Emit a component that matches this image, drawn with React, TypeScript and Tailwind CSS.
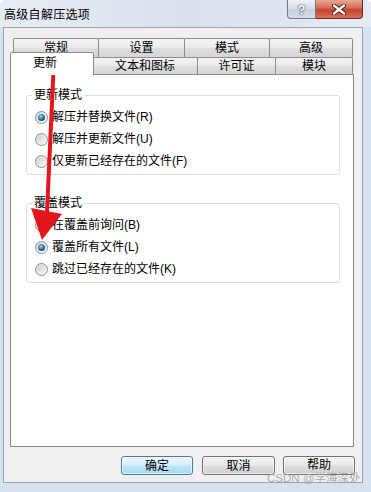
import React from 'react';

const FONT = "font-['Liberation_Sans','Noto_Sans_CJK_SC',sans-serif]";

function Radio({ checked }: { checked?: boolean }) {
    return (
        <span className="flex h-[13px] w-[13px] shrink-0 items-center justify-center rounded-full border border-[#8e8f8f] bg-[linear-gradient(135deg,#d4d4d4,#ffffff)]">
            {checked ? (
                <span className="h-[7px] w-[7px] rounded-full bg-[radial-gradient(circle_at_40%_35%,#9fd6f5,#23679a_55%,#0a2e4a)]" />
            ) : (
                <span className="h-[7px] w-[7px] rounded-full bg-[linear-gradient(135deg,#cdcdcd,#f6f6f6)]" />
            )}
        </span>
    );
}

function Group({ title, options, checked, className }: { title: string; options: string[]; checked: number; className?: string }) {
    return (
        <fieldset className={`m-0 min-w-0 rounded-[3px] border border-[#d5dfe5] p-0 ${className ?? ''}`}>
            <legend className="ml-[5px] px-[2px] text-[12px] leading-[14px]">{title}</legend>
            <div className="flex flex-col pb-[2px] pl-[8px] pt-[4px]">
                {options.map((o, i) => (
                    <div key={o} className="flex h-[22px] items-center gap-[4px] text-[12px]">
                        <Radio checked={i === checked} />
                        <span>{o}</span>
                    </div>
                ))}
            </div>
        </fieldset>
    );
}

const TAB = 'flex items-center justify-center border border-b-0 border-[#898c95] rounded-t-[2px] bg-[linear-gradient(#f4f4f4,#ececec_45%,#dedede_55%,#d6d6d6)] text-[12px] leading-[14px]';
const BTN = 'flex h-[19px] items-center justify-center rounded-[3px] border text-[12px] leading-[12px]';

export default function App() {
    return (
        <div className={`relative flex h-[492px] w-[371px] flex-col overflow-hidden rounded-t-[6px] bg-[#d6e2ef] text-black ${FONT}`}>
            {/* Title bar */}
            <div className="flex h-[27px] shrink-0 items-start justify-between bg-[linear-gradient(90deg,#e6edf5,#d9e2ec_50%,#e3ebf4)] pl-[4px] pr-[8px]">
                <span className="pt-[8px] text-[12px] leading-[14px] tracking-[0.3px]">高级自解压选项</span>
                <div className="flex h-[19px]">
                    <div className="flex w-[29px] items-center justify-center rounded-bl-[4px] border border-t-0 border-[#6d7b8c] bg-[linear-gradient(#eef2f7,#d5dde7_50%,#c3cfdc_55%,#d7e0ea)]">
                        <span className="text-[13px] font-bold leading-none text-white [text-shadow:0_0_2px_#2f3a47,0_0_1px_#2f3a47]">?</span>
                    </div>
                    <div className="flex w-[47px] items-center justify-center rounded-br-[4px] border border-l-0 border-t-0 border-[#6b2a1f] bg-[linear-gradient(#e9a896,#d66a52_45%,#c4412a_55%,#d9735c)]">
                        <svg width="14" height="11" viewBox="0 0 14 11">
                            <path d="M2 1.5 L12 9.5 M12 1.5 L2 9.5" stroke="#3b1a14" strokeWidth="4.2" strokeLinecap="round" />
                            <path d="M2 1.5 L12 9.5 M12 1.5 L2 9.5" stroke="#ffffff" strokeWidth="2.4" strokeLinecap="round" />
                        </svg>
                    </div>
                </div>
            </div>

            {/* Client area */}
            <div className="mb-[9px] ml-[3px] mr-[8px] flex flex-1 flex-col border border-[#97a5b4] bg-[#f0f0f0]">
                {/* Tab row 1 */}
                <div className="ml-[9px] mt-[10px] flex h-[19px]">
                    <div className={`${TAB} w-[86px]`}>常规</div>
                    <div className={`${TAB} -ml-px w-[87px]`}>设置</div>
                    <div className={`${TAB} -ml-px w-[86px]`}>模式</div>
                    <div className={`${TAB} -ml-px w-[84px]`}>高级</div>
                </div>
                {/* Tab row 2 */}
                <div className="ml-[6px] flex h-[17px] items-start">
                    <div className="relative z-10 -mt-[5px] flex h-[23px] w-[84px] items-start rounded-t-[2px] border border-b-0 border-[#898c95] bg-white pl-[22px] pt-[3px] text-[12px] leading-[14px]">
                        更新
                    </div>
                    <div className={`${TAB} -ml-[2px] h-[17px] w-[106px]`}>文本和图标</div>
                    <div className={`${TAB} -ml-px h-[17px] w-[79px]`}>许可证</div>
                    <div className={`${TAB} -ml-px h-[17px] w-[78px]`}>模块</div>
                </div>

                {/* Tab panel */}
                <div className="ml-[6px] flex h-[373px] w-[344px] flex-col border border-[#898c95] bg-white pl-[15px] pr-[13px] pt-[13px]">
                    <Group
                        title="更新模式"
                        checked={0}
                        options={['解压并替换文件(R)', '解压并更新文件(U)', '仅更新已经存在的文件(F)']}
                    />
                    <Group
                        className="mt-[21px]"
                        title="覆盖模式"
                        checked={1}
                        options={['在覆盖前询问(B)', '覆盖所有文件(L)', '跳过已经存在的文件(K)']}
                    />
                </div>

                {/* Buttons */}
                <div className="mt-[9px] flex justify-end gap-[8px] pr-[7px]">
                    <button className={`${BTN} w-[72px] border-[#3c7fb1] bg-[linear-gradient(#eaf6fd,#d9f0fc_45%,#bee6fd_55%,#a7d9f5)] shadow-[inset_0_0_0_1px_#ffffffb0]`}>
                        确定
                    </button>
                    <button className={`${BTN} ml-px w-[73px] border-[#707070] bg-[linear-gradient(#f2f2f2,#ebebeb_45%,#dddddd_55%,#cfcfcf)] shadow-[inset_0_0_0_1px_#ffffffa0]`}>
                        取消
                    </button>
                    <button className={`${BTN} w-[72px] items-start pt-[2px] border-[#707070] bg-[linear-gradient(#f2f2f2,#ebebeb_45%,#dddddd_55%,#cfcfcf)] shadow-[inset_0_0_0_1px_#ffffffa0]`}>
                        帮助
                    </button>
                </div>
            </div>

            {/* Watermark */}
            <span className="absolute left-[267px] top-[473px] text-[11.5px] leading-[10px] text-[#9a9a9a]/80">CSDN @学海深处</span>

            {/* Red annotation arrow */}
            <svg className="pointer-events-none absolute left-0 top-0" width="371" height="492" viewBox="0 0 371 492">
                <path d="M53.5 70 L47 212" stroke="#e3151d" strokeWidth="4" strokeLinecap="round" />
                <path d="M31 208 L62 214 L42 240 Z" fill="#e3151d" />
            </svg>
        </div>
    );
}
